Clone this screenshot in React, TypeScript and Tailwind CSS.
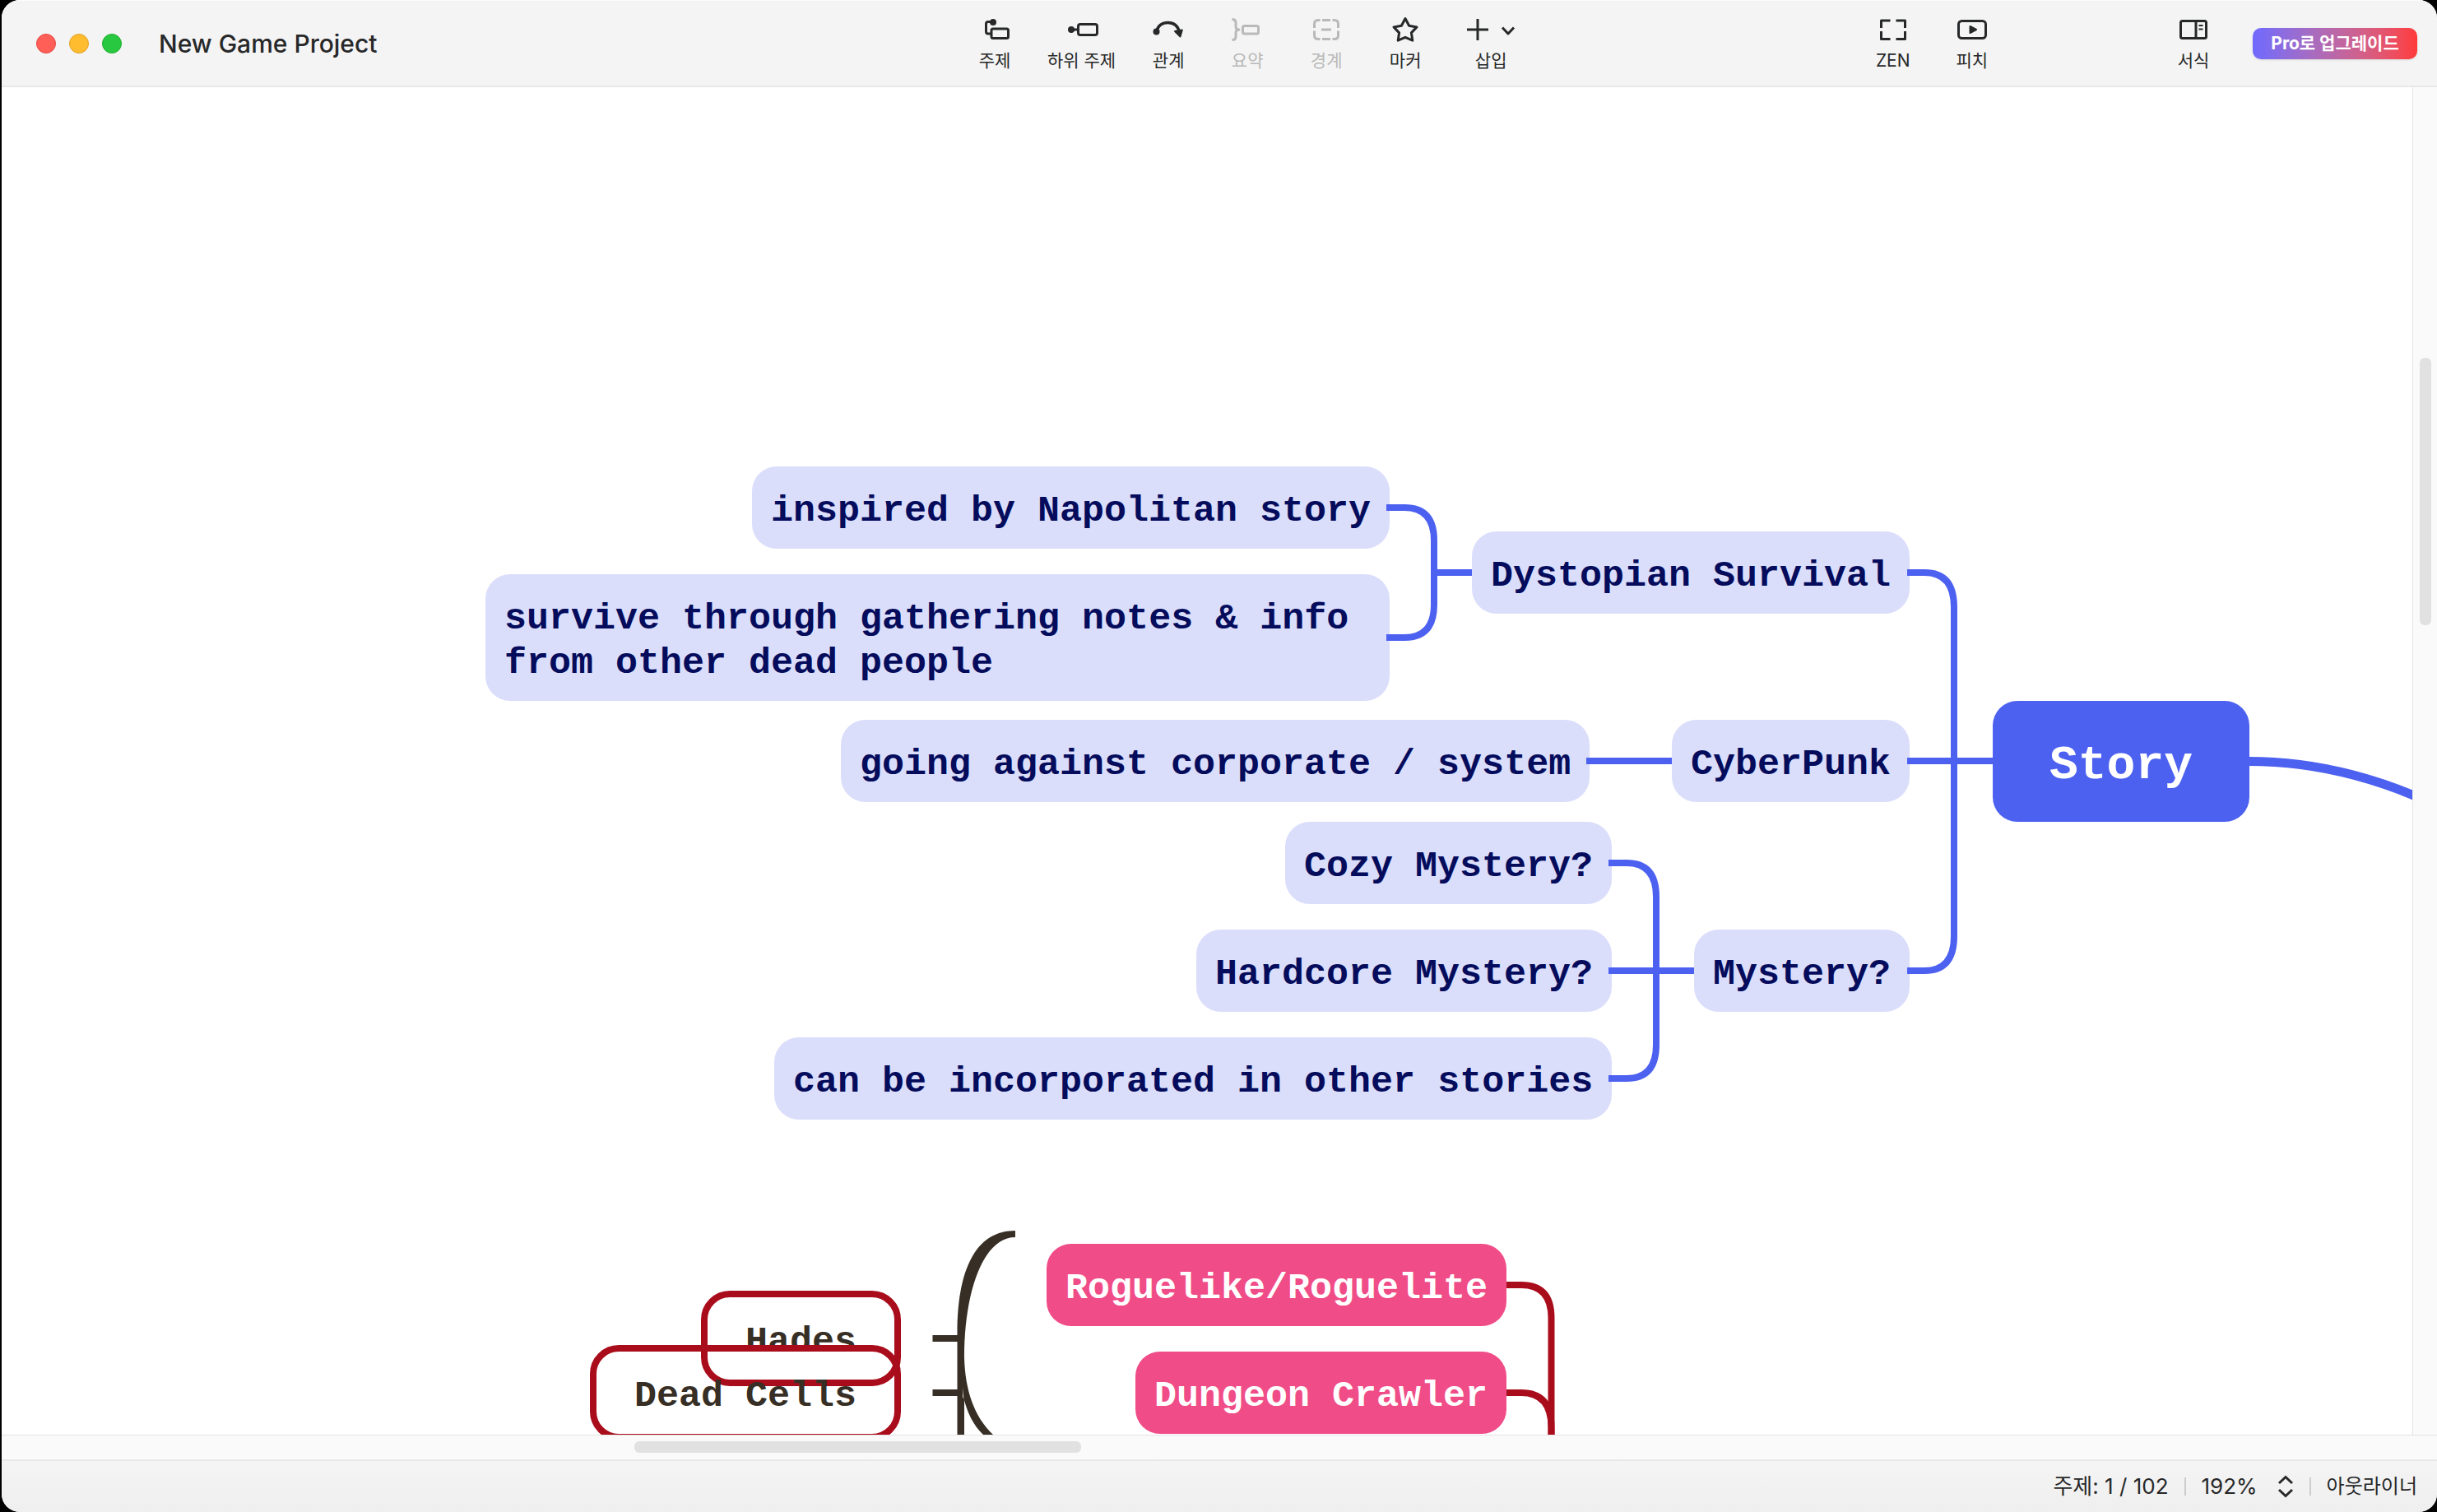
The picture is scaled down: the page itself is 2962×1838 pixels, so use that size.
import type { ReactNode } from "react";

type ToolProps = {
  label: string;
  disabled?: boolean;
  wide?: boolean;
  children: ReactNode;
};

function Tool({ label, disabled, wide, children }: ToolProps) {
  return (
    <button
      type="button"
      disabled={disabled}
      className={
        "flex min-w-16 shrink-0 flex-col items-center gap-1.5 pb-1 text-[21px] leading-6 whitespace-nowrap " +
        (disabled ? "text-[#b9b9b9]" : "text-[#272829]")
      }
    >
      <svg
        className={wide ? "h-10 w-20" : "h-10 w-10"}
        viewBox={wide ? "-10 0 80 40" : "0 0 40 40"}
        fill="none"
        stroke="currentColor"
        strokeWidth="3"
        strokeLinejoin="round"
        aria-hidden="true"
      >
        {children}
      </svg>
      <span>{label}</span>
    </button>
  );
}

type NodeProps = { place: string; kind: keyof typeof nodeStyles; children: ReactNode };

const nodeStyles = {
  soft: "rounded-[30px] bg-[#dbdefb] px-[23px] pt-[28px] pb-[18px] text-[45px] leading-[54px] text-[#050c5c]",
  pink: "rounded-[30px] bg-[#f04c87] px-[23px] pt-[28px] pb-[18px] text-[45px] leading-[54px] text-white",
  main: "rounded-[30px] bg-[#4d61f0] px-[69px] pt-[44px] pb-[33px] text-[58px] leading-[70px] text-white",
  outline:
    "rounded-[35px] border-8 border-[#a90d1b] px-[46px] pt-[28px] pb-[18px] text-[45px] leading-[54px] text-[#372f25]",
};

function Topic({ place, kind, children }: NodeProps) {
  return (
    <div
      className={
        "absolute font-['Liberation_Mono',monospace] font-bold whitespace-pre " +
        nodeStyles[kind] +
        " " +
        place
      }
    >
      {children}
    </div>
  );
}

function Connectors() {
  return (
    <svg
      className="absolute top-0 left-0 h-full w-full"
      fill="none"
      strokeWidth="8"
      aria-hidden="true"
    >
      <g transform="translate(-2 -106)">
        <g stroke="#4d61f0">
          <path d="M1685 617H1707Q1743 617 1743 657V735Q1743 775 1707 775H1685" />
          <path d="M1743 696H1789" />
          <path d="M2318 696H2339Q2375 696 2375 738V1138Q2375 1180 2339 1180H2318" />
          <path d="M2318 925H2422" />
          <path d="M1928 925H2032" />
          <path d="M1955 1049H1977Q2013 1049 2013 1090V1270Q2013 1311 1977 1311H1955" />
          <path d="M1955 1180H2059" />
          <path d="M2733 925.5Q2867 925.5 3000 999" strokeWidth="11" />
        </g>
        <g stroke="#a90d1b">
          <path d="M1831 1562H1849Q1885.500 1562 1885.500 1602V1760" />
          <path d="M1831 1693H1849Q1885.500 1693 1885.500 1735V1760" />
        </g>
        <g fill="#372f25">
          <path d="M1234 1496C1185 1496 1163.500 1545 1163.500 1620V1750H1172V1701L1170 1698L1172 1650C1172 1570 1195 1504 1234 1504Z" />
          <path d="M1172 1650C1173 1690 1184 1722 1207 1744L1213 1750H1201L1195 1744C1183 1733 1175 1716 1171 1698L1168 1660Z" />
          <path d="M1133.500 1623H1165V1631H1133.500ZM1133.500 1689H1165V1697H1133.500Z" />
        </g>
      </g>
    </svg>
  );
}

export default function App() {
  return (
    <div className="h-screen bg-black pl-0.5 font-['Inter','Noto_Sans_CJK_KR',sans-serif] text-[#272829]">
      <div className="flex h-full flex-col overflow-hidden rounded-[22px] bg-white">
        <header className="flex h-[106px] shrink-0 items-center border-t border-b-2 border-t-[#fcfcfc] border-b-[#e8e8e8] bg-[#f4f4f4] pr-6 pl-[42px]">
          <div className="flex gap-4">
            <button type="button" aria-label="Close" className="size-6 rounded-full border border-[#e2463f] bg-[#ff5f57]" />
            <button type="button" aria-label="Minimize" className="size-6 rounded-full border border-[#e0a125] bg-[#febc2e]" />
            <button type="button" aria-label="Zoom" className="size-6 rounded-full border border-[#1dad2b] bg-[#28c840]" />
          </div>
          <h1 className="ml-[45px] text-[30px] leading-9 font-medium whitespace-nowrap">New Game Project</h1>

          <div className="grow-[7] basis-0" />

          <div className="mr-1.5 flex shrink-0 gap-8">
            <Tool label="주제">
              <rect x="16" y="19" width="20.500" height="11.500" rx="2" />
              <path d="M18 10.500H12Q9.500 10.500 9.500 13V22.500Q9.500 25 12 25H16" />
              <circle cx="18" cy="11" r="4" fill="currentColor" stroke="none" />
            </Tool>
            <Tool label="하위 주제">
              <rect x="15.500" y="13.500" width="23" height="13" rx="2.500" />
              <path d="M7 20H15" />
              <circle cx="7" cy="20" r="4" fill="currentColor" stroke="none" />
            </Tool>
            <Tool label="관계">
              <path d="M5.500 22C8 14 13 11.500 19.500 11.500C26.500 11.500 31.500 15 33.500 23" strokeWidth="3.500" />
              <circle cx="5.500" cy="22.500" r="4" fill="currentColor" stroke="none" />
              <path d="M28 22L36.800 20.500L34.500 28.500Z" fill="currentColor" strokeWidth="2" />
            </Tool>
            <Tool label="요약" disabled>
              <path d="M1.500 7.500Q6 7.500 6 11.500V16Q6 20 10 20Q6 20 6 24V28.500Q6 32.500 1.500 32.500" />
              <rect x="14.500" y="15.500" width="19" height="9.500" rx="2" />
            </Tool>
            <Tool label="경계" disabled>
              <path d="M12.500 8.500H10Q5.500 8.500 5.500 13V18M27.500 8.500H30Q34.500 8.500 34.500 13V18M12.500 31.500H10Q5.500 31.500 5.500 27V21.500M27.500 31.500H30Q34.500 31.500 34.500 27V21.500M15 8.500H25M15 31.500H25M14 20H26" />
            </Tool>
            <Tool label="마커">
              <path d="M20 6.500L24.600 15.300L34 16.900L27.400 23.900L28.800 33.200L20 29.300L11.200 33.200L12.600 23.900L6 16.900L15.400 15.300Z" />
            </Tool>
            <Tool label="삽입" wide>
              <path d="M1 20H27M14 7V33" />
              <path d="M44 17.500L51 25L58 17.500" />
            </Tool>
          </div>

          <div className="grow-[4] basis-0" />

          <div className="flex shrink-0 gap-8">
            <Tool label="ZEN">
              <path d="M16.500 9H5.500V18M23.500 9H34.500V18M16.500 31.500H5.500V22M23.500 31.500H34.500V22" />
            </Tool>
            <Tool label="피치">
              <rect x="3.500" y="9.500" width="33" height="21" rx="4" />
              <path d="M17.500 16L25 20L17.500 24Z" fill="currentColor" strokeWidth="2" />
            </Tool>
          </div>

          <div className="grow-[2] basis-0" />

          <div className="flex shrink-0 items-center gap-10">
            <Tool label="서식">
              <rect x="4.500" y="9.500" width="31" height="21" rx="2" />
              <path d="M23 9V31" />
              <path d="M26.500 15H31.500M26.500 19.500H31.500" strokeWidth="2" />
            </Tool>
            <button
              type="button"
              className="h-[38px] w-[200px] rounded-[10px] bg-linear-to-r from-[#6f69ff] to-[#ff3838] text-[21px] leading-6 font-bold whitespace-nowrap text-white shadow-sm"
            >
              Pro로 업그레이드
            </button>
          </div>
        </header>

        <div className="flex min-h-0 flex-1">
          <main className="relative min-w-0 flex-1 overflow-hidden bg-white">
            <Topic kind="soft" place="left-[912px] top-[461px]">inspired by Napolitan story</Topic>
            <Topic kind="soft" place="left-[588px] top-[592px]">
              {"survive through gathering notes & info \nfrom other dead people"}
            </Topic>
            <Topic kind="soft" place="left-[1787px] top-[540px]">Dystopian Survival</Topic>
            <Topic kind="soft" place="left-[1020px] top-[769px]">going against corporate / system</Topic>
            <Topic kind="soft" place="left-[2030px] top-[769px]">CyberPunk</Topic>
            <Topic kind="soft" place="left-[1560px] top-[893px]">Cozy Mystery?</Topic>
            <Topic kind="soft" place="left-[1452px] top-[1024px]">Hardcore Mystery?</Topic>
            <Topic kind="soft" place="left-[2057px] top-[1024px]">Mystery?</Topic>
            <Topic kind="soft" place="left-[939px] top-[1155px]">can be incorporated in other stories</Topic>
            <Topic kind="main" place="left-[2420px] top-[746px]">Story</Topic>
            <Topic kind="pink" place="left-[1270px] top-[1406px]">Roguelike/Roguelite</Topic>
            <Topic kind="pink" place="left-[1378px] top-[1537px]">Dungeon Crawler</Topic>
            <Topic kind="outline" place="left-[850px] top-[1463px]">Hades</Topic>
            <Topic kind="outline" place="left-[715px] top-[1529px]">Dead Cells</Topic>
            <Connectors />
          </main>
          <div className="flex w-[30px] shrink-0 flex-col items-center border-l border-[#e4e4e4] bg-[#fafafa] pt-[329px]">
            <div className="h-[325px] w-3.5 rounded-md bg-[#e1e1e1]" />
          </div>
        </div>

        <div className="flex h-[30px] shrink-0 items-center border-t border-[#e4e4e4] bg-[#fafafa] pb-0.5 pl-[769px]">
          <div className="h-3.5 w-[543px] rounded-md bg-[#e1e1e1]" />
        </div>

        <footer className="flex h-16 shrink-0 items-center justify-end gap-[19px] border-t-2 border-[#e8e8e8] bg-linear-to-b from-[#f4f4f4] to-[#efefef] pr-6 text-[26px] leading-8 whitespace-nowrap">
          <span>주제: 1 / 102</span>
          <span className="h-[22px] w-0.5 bg-[#cccccc]" />
          <button type="button" className="flex items-center gap-6">
            <span>192%</span>
            <svg
              className="h-7 w-5"
              viewBox="0 0 20 28"
              fill="none"
              stroke="currentColor"
              strokeWidth="3"
              aria-hidden="true"
            >
              <path d="M2 10L10 2.500L18 10M2 18L10 25.500L18 18" />
            </svg>
          </button>
          <span className="h-[22px] w-0.5 bg-[#cccccc]" />
          <button type="button" className="text-[24px]">아웃라이너</button>
        </footer>
      </div>
    </div>
  );
}
